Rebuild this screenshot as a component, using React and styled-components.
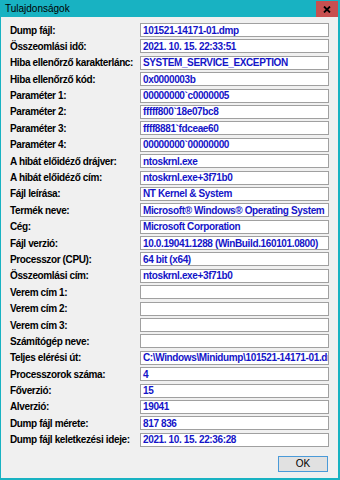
import React from "react";
import styled, { createGlobalStyle } from "styled-components";

const Global = createGlobalStyle`
  html, body { margin: 0; padding: 0; background: #f0f0f0; }
  body { width: 340px; height: 480px; overflow: hidden; }
`;

const Window = styled.div`
  box-sizing: border-box;
  width: 340px;
  height: 480px;
  display: flex;
  flex-direction: column;
  background: #f0f0f0;
  border-left: 1px solid #18b2c2;
  border-right: 2px solid #18b2c2;
  border-bottom: 2px solid #18b2c2;
`;

const TitleBar = styled.div`
  height: 17px;
  flex: none;
  display: flex;
  align-items: center;
  justify-content: space-between;
  background: #18b2c2;
`;

const Title = styled.span`
  padding-left: 4px;
  font-family: "Liberation Sans", Arial, sans-serif;
  font-size: 10px;
  color: #000;
`;

const CloseButton = styled.div`
  width: 22px;
  height: 16px;
  margin-top: 1px;
  align-self: flex-start;
  background: #c75050;
  display: flex;
  align-items: center;
  justify-content: center;
`;

const Body = styled.div`
  flex: 1;
  display: flex;
  flex-direction: column;
  padding: 6px 9px 0 9px;
`;

const Grid = styled.div`
  display: grid;
  grid-template-columns: 130px 189px;
  grid-auto-rows: 14px;
  row-gap: 2.4px;
`;

const Label = styled.div`
  display: flex;
  align-items: center;
  font-family: "Liberation Sans", Arial, sans-serif;
  font-weight: bold;
  font-size: 10px;
  letter-spacing: -0.37px;
  color: #000;
  white-space: nowrap;
`;

const Field = styled.div`
  box-sizing: border-box;
  height: 14px;
  background: #fff;
  border: 1px solid #a0a0a0;
  display: flex;
  align-items: center;
  padding-left: 2px;
  overflow: hidden;
  white-space: nowrap;
  font-family: "Liberation Sans", Arial, sans-serif;
  font-weight: bold;
  font-size: 10px;
  letter-spacing: -0.37px;
  color: #1414c8;
`;

const Footer = styled.div`
  display: flex;
  justify-content: flex-end;
  padding-top: 9px;
`;

const OkButton = styled.button`
  box-sizing: border-box;
  width: 50px;
  height: 16px;
  margin-right: 1px;
  padding: 0;
  background: #e1e1e1;
  border: 1px solid #4a9ad8;
  font-family: "Liberation Sans", Arial, sans-serif;
  font-size: 10px;
  color: #000;
`;

const rows = [
  ["Dump fájl:", "101521-14171-01.dmp"],
  ["Összeomlási idő:", "2021. 10. 15. 22:33:51"],
  ["Hiba ellenőrző karakterlánc:", "SYSTEM_SERVICE_EXCEPTION"],
  ["Hiba ellenőrző kód:", "0x0000003b"],
  ["Paraméter 1:", "00000000`c0000005"],
  ["Paraméter 2:", "fffff800`18e07bc8"],
  ["Paraméter 3:", "ffff8881`fdceae60"],
  ["Paraméter 4:", "00000000`00000000"],
  ["A hibát előidéző drájver:", "ntoskrnl.exe"],
  ["A hibát előidéző cím:", "ntoskrnl.exe+3f71b0"],
  ["Fájl leírása:", "NT Kernel & System"],
  ["Termék neve:", "Microsoft® Windows® Operating System"],
  ["Cég:", "Microsoft Corporation"],
  ["Fájl verzió:", "10.0.19041.1288 (WinBuild.160101.0800)"],
  ["Processzor (CPU):", "64 bit (x64)"],
  ["Összeomlási cím:", "ntoskrnl.exe+3f71b0"],
  ["Verem cím 1:", ""],
  ["Verem cím 2:", ""],
  ["Verem cím 3:", ""],
  ["Számítógép neve:", ""],
  ["Teljes elérési út:", "C:\\Windows\\Minidump\\101521-14171-01.dmp"],
  ["Processzorok száma:", "4"],
  ["Főverzió:", "15"],
  ["Alverzió:", "19041"],
  ["Dump fájl mérete:", "817 836"],
  ["Dump fájl keletkezési ideje:", "2021. 10. 15. 22:36:28"],
];

export default function App() {
  return (
    <>
      <Global />
      <Window>
        <TitleBar>
          <Title>Tulajdonságok</Title>
          <CloseButton>
            <svg width="8" height="7" viewBox="0 0 8 7">
              <path d="M1 0.5 L7 6.5 M7 0.5 L1 6.5" stroke="#000" strokeWidth="1.8" />
            </svg>
          </CloseButton>
        </TitleBar>
        <Body>
          <Grid>
            {rows.map(([label, value]) => (
              <React.Fragment key={label}>
                <Label>{label}</Label>
                <Field>{value}</Field>
              </React.Fragment>
            ))}
          </Grid>
          <Footer>
            <OkButton>OK</OkButton>
          </Footer>
        </Body>
      </Window>
    </>
  );
}
